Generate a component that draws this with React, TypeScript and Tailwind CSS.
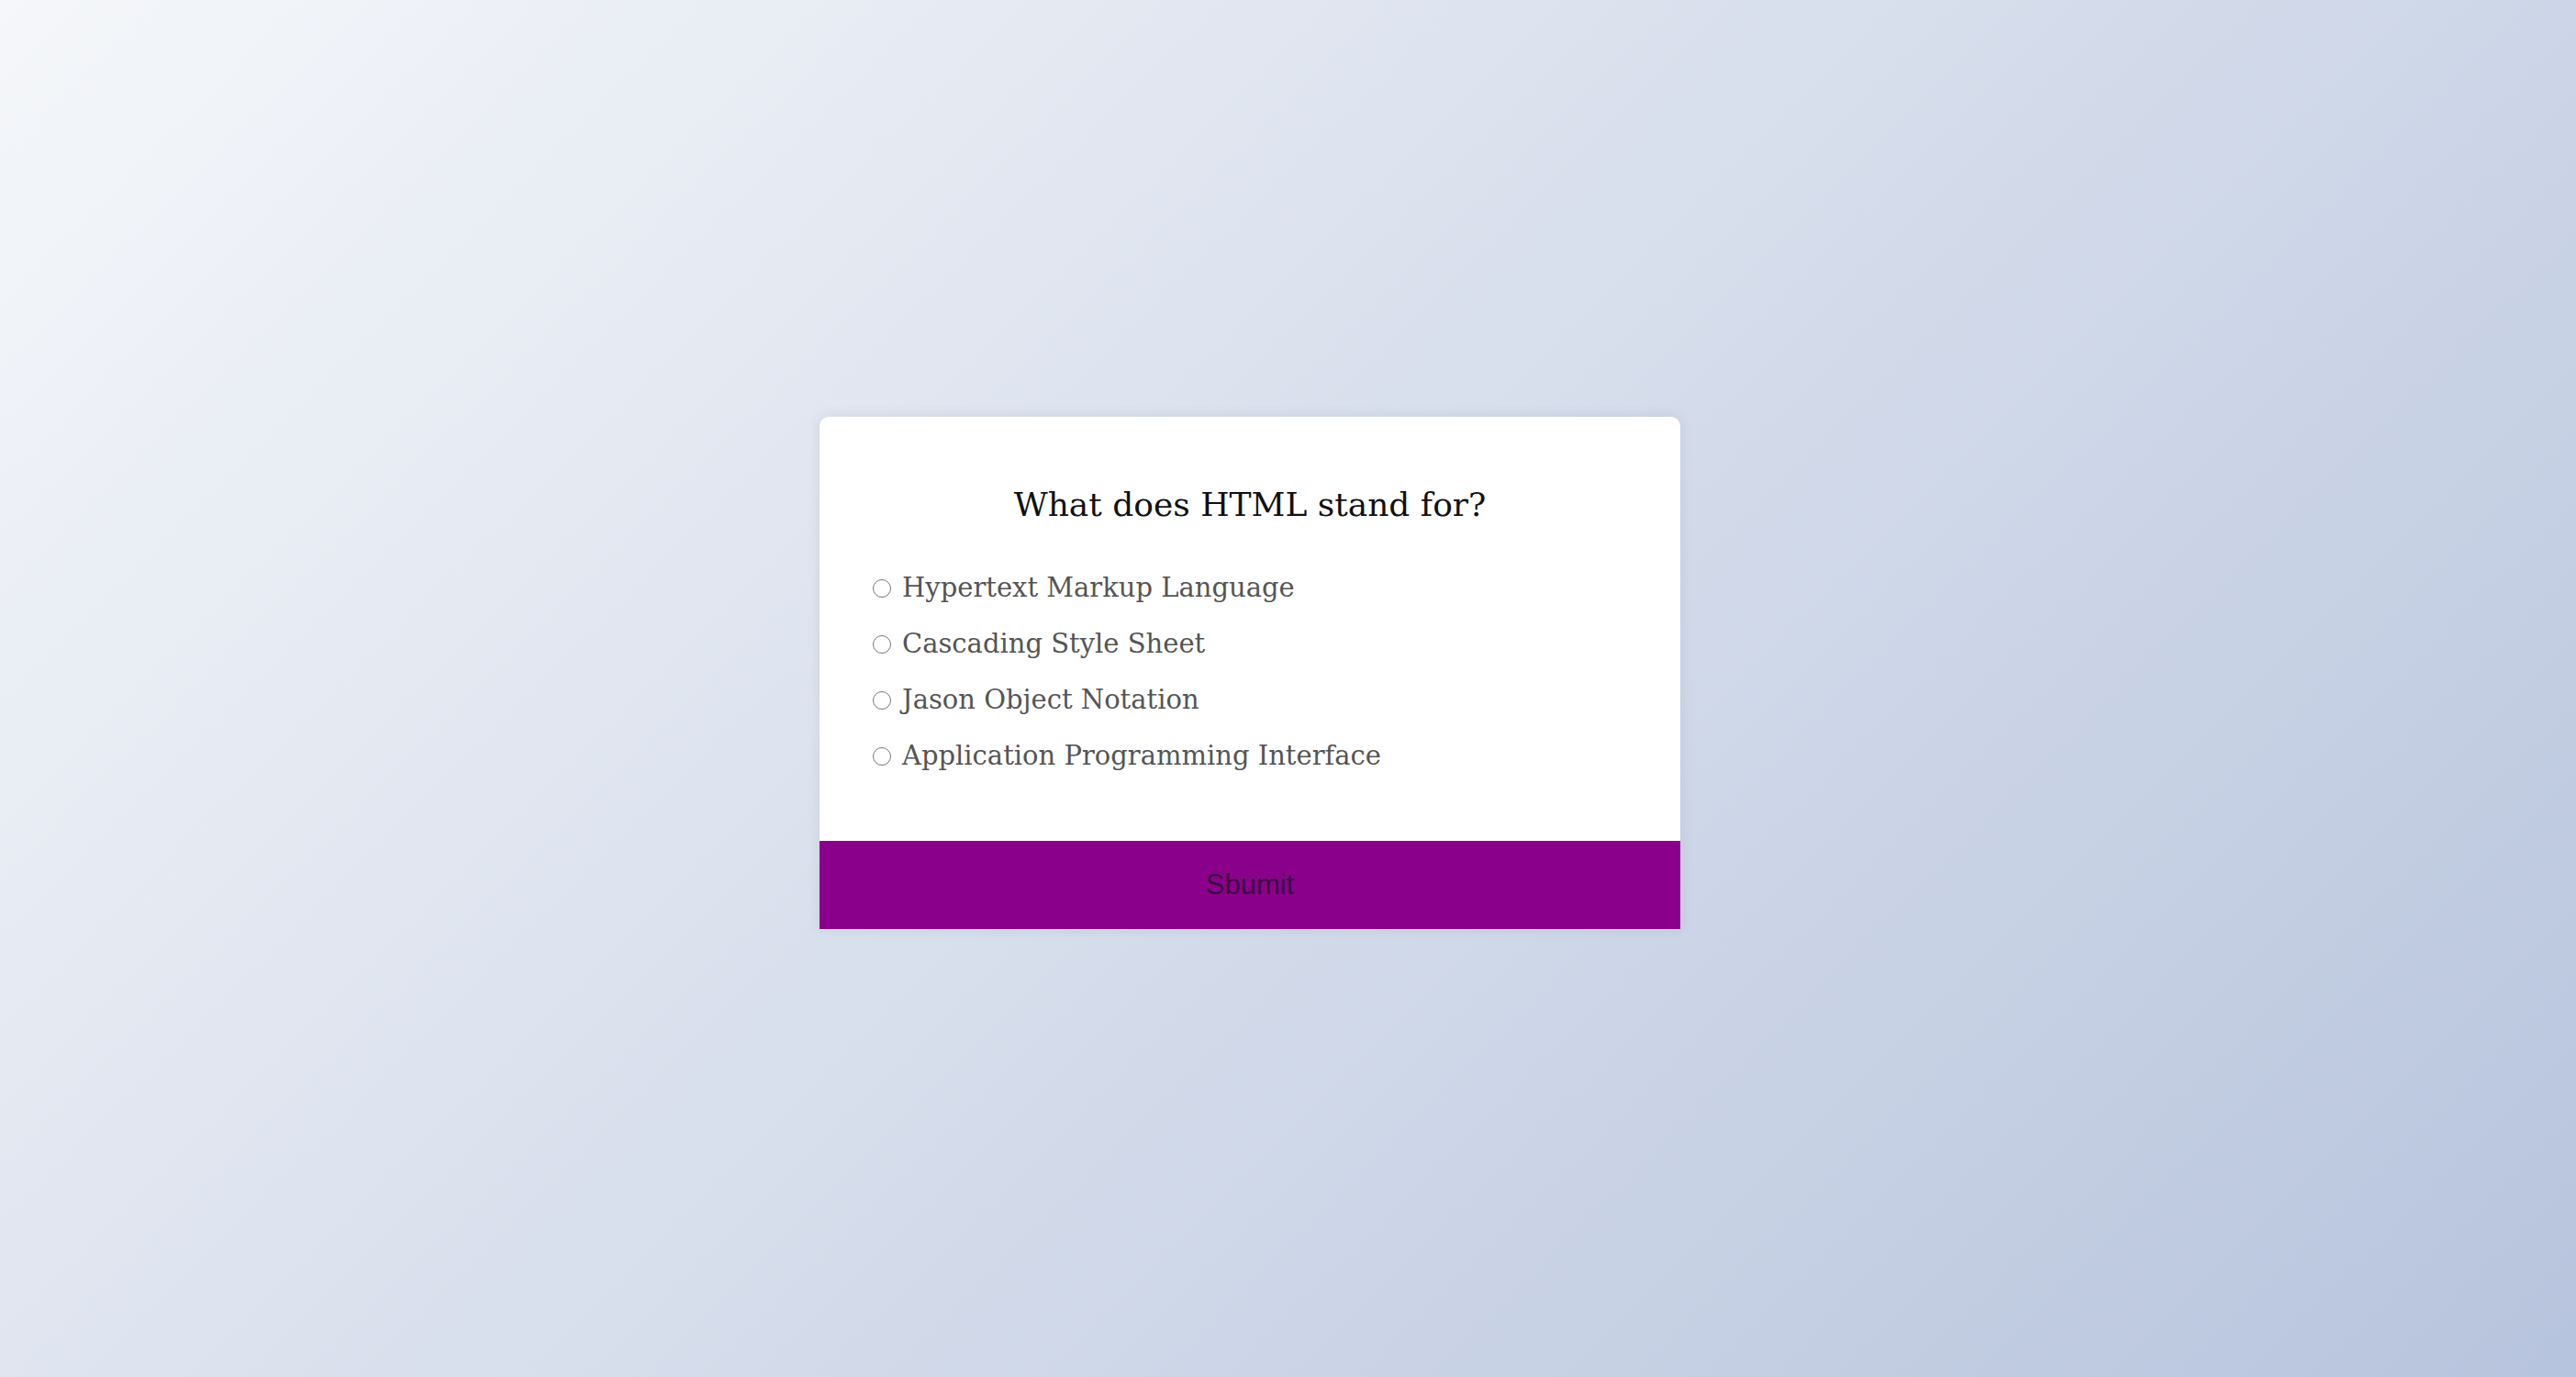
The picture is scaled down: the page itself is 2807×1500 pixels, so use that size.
const OPTIONS = [
  'Hypertext Markup Language',
  'Cascading Style Sheet',
  'Jason Object Notation',
  'Application Programming Interface',
];

export default function App() {
  return (
    <main className="min-h-screen w-full flex items-center justify-center pr-[83px] pb-[34px] bg-[linear-gradient(135deg,#f5f7fa_0%,#b7c4dd_100%)]">
      <div className="w-[938px] bg-white rounded-t-[10px] shadow-[0_0_12px_2px_rgba(100,110,140,0.12)]">
        <div className="px-[58px] pt-[74px] pb-[62px]">
          <h2 className="text-center text-[36px] leading-[44px] text-[#111] font-['DejaVu_Serif',serif]">
            What does HTML stand for?
          </h2>
          <ul className="mt-[38px]">
            {OPTIONS.map((opt) => (
              <li key={opt} className="flex items-center gap-[12px] h-[61px]">
                <span className="w-[20px] h-[20px] rounded-full border-[1.5px] border-[#777] bg-white shrink-0" />
                <label className="text-[29px] leading-[61px] text-[#555] font-['DejaVu_Serif',serif]">
                  {opt}
                </label>
              </li>
            ))}
          </ul>
        </div>
        <button className="block w-full h-[96px] bg-[#8b008b] text-[31px] text-[#3a0842] font-['Liberation_Sans',sans-serif]">
          Sbumit
        </button>
      </div>
    </main>
  );
}
